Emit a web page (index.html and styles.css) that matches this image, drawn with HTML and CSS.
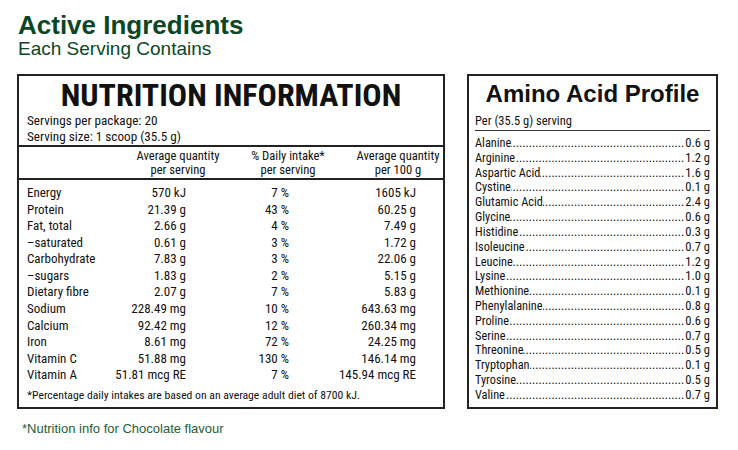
FILE: index.html
```html
<!DOCTYPE html>
<html>
<head>
<meta charset="utf-8">
<link rel="stylesheet" href="styles.css">
</head>
<body>
<div class="page">
  <header class="head">
    <h1 class="title">Active Ingredients</h1>
    <p class="subtitle">Each Serving Contains</p>
  </header>
  <div class="panels">
    <section class="nip">
      <h2 class="nip-title">NUTRITION INFORMATION</h2>
      <div class="serving">
        <div>Servings per package: 20</div>
        <div>Serving size: 1 scoop (35.5 g)</div>
      </div>
      <div class="nip-head">
        <span></span>
        <span>Average quantity<br>per serving</span>
        <span>% Daily intake*<br>per serving</span>
        <span>Average quantity<br>per 100 g</span>
      </div>
      <div class="nip-body">
        <div class="row"><span class="lbl">Energy</span><span>570 kJ</span><span>7 %</span><span>1605 kJ</span></div>
        <div class="row"><span class="lbl">Protein</span><span>21.39 g</span><span>43 %</span><span>60.25 g</span></div>
        <div class="row"><span class="lbl">Fat, total</span><span>2.66 g</span><span>4 %</span><span>7.49 g</span></div>
        <div class="row"><span class="lbl">–saturated</span><span>0.61 g</span><span>3 %</span><span>1.72 g</span></div>
        <div class="row"><span class="lbl">Carbohydrate</span><span>7.83 g</span><span>3 %</span><span>22.06 g</span></div>
        <div class="row"><span class="lbl">–sugars</span><span>1.83 g</span><span>2 %</span><span>5.15 g</span></div>
        <div class="row"><span class="lbl">Dietary fibre</span><span>2.07 g</span><span>7 %</span><span>5.83 g</span></div>
        <div class="row"><span class="lbl">Sodium</span><span>228.49 mg</span><span>10 %</span><span>643.63 mg</span></div>
        <div class="row"><span class="lbl">Calcium</span><span>92.42 mg</span><span>12 %</span><span>260.34 mg</span></div>
        <div class="row"><span class="lbl">Iron</span><span>8.61 mg</span><span>72 %</span><span>24.25 mg</span></div>
        <div class="row"><span class="lbl">Vitamin C</span><span>51.88 mg</span><span>130 %</span><span>146.14 mg</span></div>
        <div class="row"><span class="lbl">Vitamin A</span><span>51.81 mcg RE</span><span>7 %</span><span>145.94 mcg RE</span></div>
        <p class="nip-note">*Percentage daily intakes are based on an average adult diet of 8700 kJ.</p>
      </div>
    </section>
    <section class="amino">
      <h2 class="amino-title">Amino Acid Profile</h2>
      <div class="per">Per (35.5 g) serving</div>
      <ul class="amino-list">
        <li><span class="name">Alanine</span><span class="dots"></span><span class="val">0.6 g</span></li>
        <li><span class="name">Arginine</span><span class="dots"></span><span class="val">1.2 g</span></li>
        <li><span class="name">Aspartic Acid</span><span class="dots"></span><span class="val">1.6 g</span></li>
        <li><span class="name">Cystine</span><span class="dots"></span><span class="val">0.1 g</span></li>
        <li><span class="name">Glutamic Acid</span><span class="dots"></span><span class="val">2.4 g</span></li>
        <li><span class="name">Glycine</span><span class="dots"></span><span class="val">0.6 g</span></li>
        <li><span class="name">Histidine</span><span class="dots"></span><span class="val">0.3 g</span></li>
        <li><span class="name">Isoleucine</span><span class="dots"></span><span class="val">0.7 g</span></li>
        <li><span class="name">Leucine</span><span class="dots"></span><span class="val">1.2 g</span></li>
        <li><span class="name">Lysine</span><span class="dots"></span><span class="val">1.0 g</span></li>
        <li><span class="name">Methionine</span><span class="dots"></span><span class="val">0.1 g</span></li>
        <li><span class="name">Phenylalanine</span><span class="dots"></span><span class="val">0.8 g</span></li>
        <li><span class="name">Proline</span><span class="dots"></span><span class="val">0.6 g</span></li>
        <li><span class="name">Serine</span><span class="dots"></span><span class="val">0.7 g</span></li>
        <li><span class="name">Threonine</span><span class="dots"></span><span class="val">0.5 g</span></li>
        <li><span class="name">Tryptophan</span><span class="dots"></span><span class="val">0.1 g</span></li>
        <li><span class="name">Tyrosine</span><span class="dots"></span><span class="val">0.5 g</span></li>
        <li><span class="name">Valine</span><span class="dots"></span><span class="val">0.7 g</span></li>
      </ul>
    </section>
  </div>
  <p class="flavour">*Nutrition info for Chocolate flavour</p>
</div>
</body>
</html>
```

FILE: styles.css
```css
* { box-sizing: border-box; }
html, body { margin: 0; padding: 0; background: #fff; }
body {
  font-family: "Liberation Sans", Arial, sans-serif;
  color: #111;
}
.page { width: 738px; height: 450px; padding: 12px 0 0 17px; }

.head { padding-left: 1px; }
.title {
  margin: 0;
  font-size: 26px;
  line-height: 26px;
  font-weight: bold;
  color: #0b4726;
}
.subtitle {
  margin: 1px 0 0;
  font-size: 19px;
  line-height: 20px;
  color: #0b4726;
}

.panels {
  display: flex;
  gap: 22px;
  margin-top: 15px;
  height: 335px;
}

.nip, .amino .per, .amino-list {
  font-family: "Roboto", "Liberation Sans", sans-serif;
  font-stretch: 76%;
}

.nip {
  width: 428px;
  border: 2px solid #222;
  display: flex;
  flex-direction: column;
}
.nip-title {
  margin: 3px 0 0;
  font-size: 32px;
  line-height: 32px;
  font-weight: bold;
  font-stretch: 86%;
  text-align: center;
  color: #111;
}
.serving {
  margin-top: 2px;
  padding-left: 8px;
  font-size: 13.2px;
  line-height: 16px;
  font-stretch: 80%;
  border-bottom: 2px solid #222;
}
.nip-head {
  display: grid;
  grid-template-columns: 91px 100px 100px 100px;
  column-gap: 10px;
  padding: 2px 0 2px 8px;
  font-size: 12.6px;
  line-height: 13.5px;
  text-align: center;
  border-bottom: 2px solid #222;
}
.nip-body { padding: 5px 0 0 8px; }
.row {
  display: grid;
  grid-template-columns: 83px 76px 103px 127px;
  font-size: 13px;
  line-height: 16.57px;
  height: 16.57px;
  text-align: right;
}
.row .lbl { text-align: left; }
.nip-note {
  margin: 3px 0 0;
  font-size: 11.7px;
  line-height: 16px;
  font-stretch: 75%;
}

.amino {
  width: 251px;
  border: 2px solid #222;
  padding: 0 6px;
}
.amino-title {
  margin: 6px 0 0;
  font-size: 24px;
  line-height: 24px;
  font-weight: bold;
  text-align: center;
  color: #111;
}
.per {
  margin-top: 8px;
  font-size: 12.5px;
  line-height: 14px;
  padding-bottom: 1.5px;
  border-bottom: 1.5px solid #333;
}
.amino-list {
  list-style: none;
  margin: 5.5px 0 0;
  padding: 0;
  font-size: 12.3px;
}
.amino-list li {
  display: flex;
  height: 14.82px;
  line-height: 14.82px;
}
.amino-list .dots {
  flex: 1;
  overflow: hidden;
  white-space: nowrap;
  padding: 0 1px 0 2px;
  direction: rtl;
}
.amino-list .dots::before {
  content: "....................................................................................................................................";
}
.amino-list .val { flex: none; font-size: 12.5px; }

.flavour {
  margin: 12px 0 0 5px;
  font-size: 13px;
  line-height: 16px;
  color: #1d5e32;
}
```
